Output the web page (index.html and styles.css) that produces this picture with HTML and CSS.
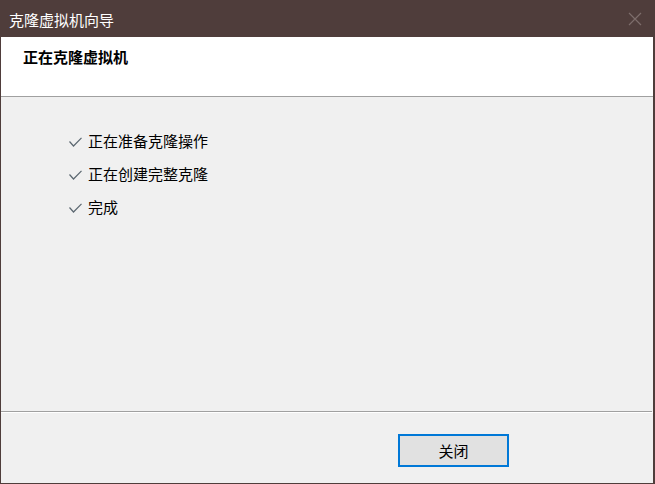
FILE: index.html
```html
<!DOCTYPE html>
<html lang="zh-CN">
<head>
<meta charset="utf-8">
<title>克隆虚拟机向导</title>
<link rel="stylesheet" href="styles.css">
</head>
<body>
<div class="window">
  <div class="titlebar">
    <span class="title">克隆虚拟机向导</span>
    <svg class="close" width="14" height="14" viewBox="0 0 14 14"><path d="M1 1L13 13M13 1L1 13" stroke="#7d6d6b" stroke-width="1.2" fill="none"/></svg>
  </div>
  <div class="header">
    <div class="heading">正在克隆虚拟机</div>
  </div>
  <div class="content">
    <ul class="steps">
      <li class="step"><svg class="check" width="13" height="10" viewBox="0 0 13 10"><path d="M0.5 4.5L4.5 9L12.5 0.8" stroke="#5b6770" stroke-width="1.2" fill="none"/></svg><span>正在准备克隆操作</span></li>
      <li class="step"><svg class="check" width="13" height="10" viewBox="0 0 13 10"><path d="M0.5 4.5L4.5 9L12.5 0.8" stroke="#5b6770" stroke-width="1.2" fill="none"/></svg><span>正在创建完整克隆</span></li>
      <li class="step"><svg class="check" width="13" height="10" viewBox="0 0 13 10"><path d="M0.5 4.5L4.5 9L12.5 0.8" stroke="#5b6770" stroke-width="1.2" fill="none"/></svg><span>完成</span></li>
    </ul>
  </div>
  <div class="footer">
    <button class="btn">关闭</button>
  </div>
</div>
</body>
</html>
```

FILE: styles.css
```css
* { box-sizing: border-box; }
html, body { margin: 0; padding: 0; }
body {
  width: 655px;
  height: 484px;
  font-family: "Noto Sans CJK SC", "Noto Sans", sans-serif;
  overflow: hidden;
}
.window {
  width: 655px;
  height: 484px;
  display: flex;
  flex-direction: column;
  background: #f0f0f0;
  border-left: 1px solid #4f3d3b;
  border-right: 2px solid #4f3d3b;
  border-bottom: 1px solid #4f3d3b;
}
.titlebar {
  height: 37px;
  flex: none;
  background: #4f3d3b;
  color: #ffffff;
  display: flex;
  align-items: center;
  justify-content: space-between;
  padding: 0 13px 0 9px;
  margin-left: -1px;
  margin-right: -2px;
}
.title {
  font-size: 15px;
  line-height: 20px;
  padding-top: 2px;
}
.close { display: block; margin-top: 1px; }
.header {
  height: 60px;
  flex: none;
  background: #ffffff;
  border-bottom: 1px solid #a0a0a0;
  padding: 9px 0 0 22px;
}
.heading {
  font-size: 15px;
  font-weight: bold;
  color: #000;
  line-height: 22px;
}
.content {
  flex: 1;
  border-bottom: 1px solid #a0a0a0;
  margin-right: 1px;
}
.steps {
  list-style: none;
  margin: 0;
  padding: 31px 0 0 68px;
  display: flex;
  flex-direction: column;
  gap: 9px;
}
.step {
  display: flex;
  align-items: center;
  height: 24px;
  font-size: 15px;
  color: #000;
}
.check { margin: 3px 6px 0 0; flex: none; }
.footer {
  height: 71px;
  flex: none;
  border-top: 1px solid #ffffff;
  padding: 21px 0 0 397px;
}
.btn {
  width: 111px;
  height: 33px;
  background: #e1e1e1;
  border: 2px solid #0078d7;
  font-family: "Noto Sans CJK SC", sans-serif;
  font-size: 15px;
  color: #000;
  padding: 0;
  margin: 0;
}
```
